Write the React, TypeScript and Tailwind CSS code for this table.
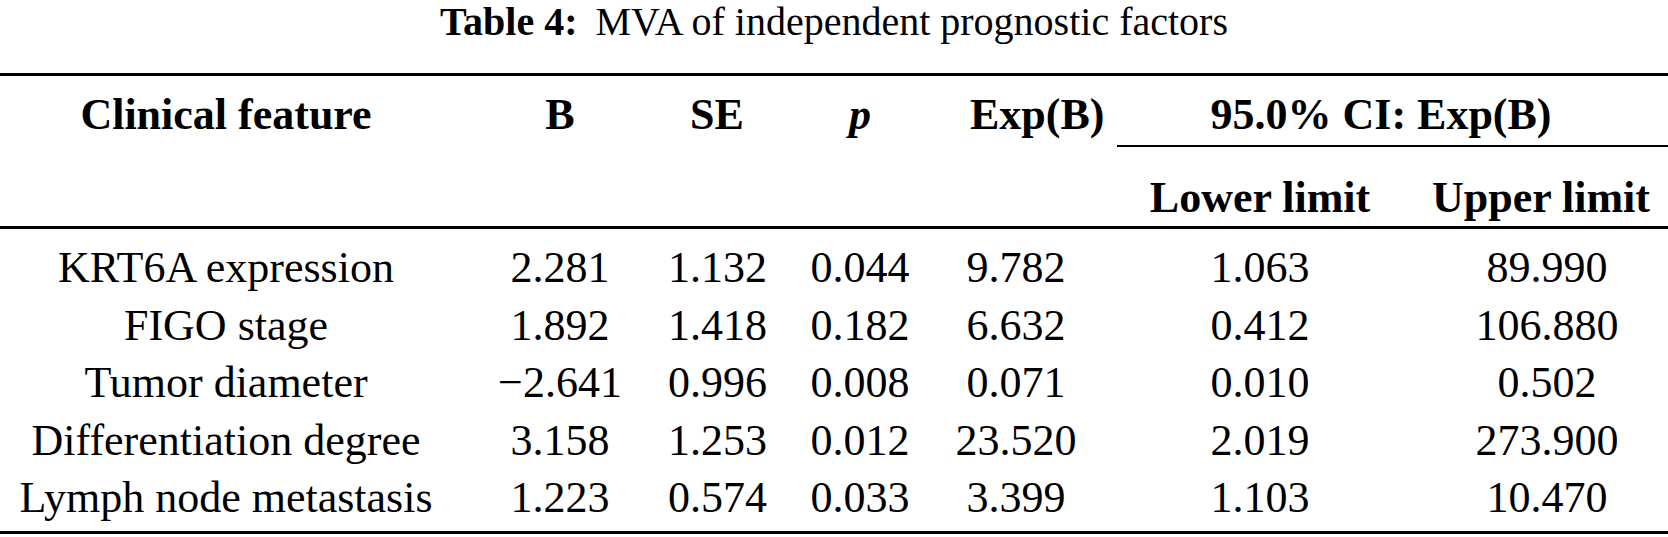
const rows: string[][] = [
  ["KRT6A expression", "2.281", "1.132", "0.044", "9.782", "1.063", "89.990"],
  ["FIGO stage", "1.892", "1.418", "0.182", "6.632", "0.412", "106.880"],
  ["Tumor diameter", "\u22122.641", "0.996", "0.008", "0.071", "0.010", "0.502"],
  ["Differentiation degree", "3.158", "1.253", "0.012", "23.520", "2.019", "273.900"],
  ["Lymph node metastasis", "1.223", "0.574", "0.033", "3.399", "1.103", "10.470"],
];

const cols = "grid grid-cols-[452px_216px_98px_188px_124px_364px_226px]";

export default function App() {
  return (
    <div className="w-[1668px] h-[537px] bg-white text-black font-['Liberation_Serif','Times_New_Roman',serif]">
      {/* caption */}
      <div className="h-[73px] text-center text-[40px] leading-[44px] whitespace-nowrap">
        <span className="font-bold">Table 4:</span>
        <span className="ml-[18px]">MVA of independent prognostic factors</span>
      </div>

      <div className="border-t-[3px] border-black">
        {/* header */}
        <div
          className={`${cols} grid-rows-[71px_79px] text-[44px] leading-[44px] font-bold text-center whitespace-nowrap`}
        >
          <div className="pt-[17px]">Clinical feature</div>
          <div className="pt-[17px]">B</div>
          <div className="pt-[17px]">SE</div>
          <div className="pt-[17px] italic">p</div>
          <div className="pt-[17px] pl-[16px]">Exp(B)</div>
          <div className="col-span-2 ml-[39px] pr-[23px] pt-[17px] border-b-2 border-black">
            95.0% CI: Exp(B)
          </div>
          <div className="col-span-5" />
          <div className="pt-[29px]">Lower limit</div>
          <div className="flex justify-center pt-[29px] pr-[28px]">
            <span>Upper limit</span>
          </div>
        </div>

        {/* body */}
        <div className="border-t-[3px] border-b-[3px] border-black pt-[10px] pb-[4px] text-[44px] leading-[57.5px] text-center whitespace-nowrap">
          {rows.map((r) => (
            <div key={r[0]} className={cols}>
              {r.map((v, i) => (
                <div key={i} className={i === 6 ? "pr-[16px]" : ""}>
                  {v}
                </div>
              ))}
            </div>
          ))}
        </div>
      </div>
    </div>
  );
}
